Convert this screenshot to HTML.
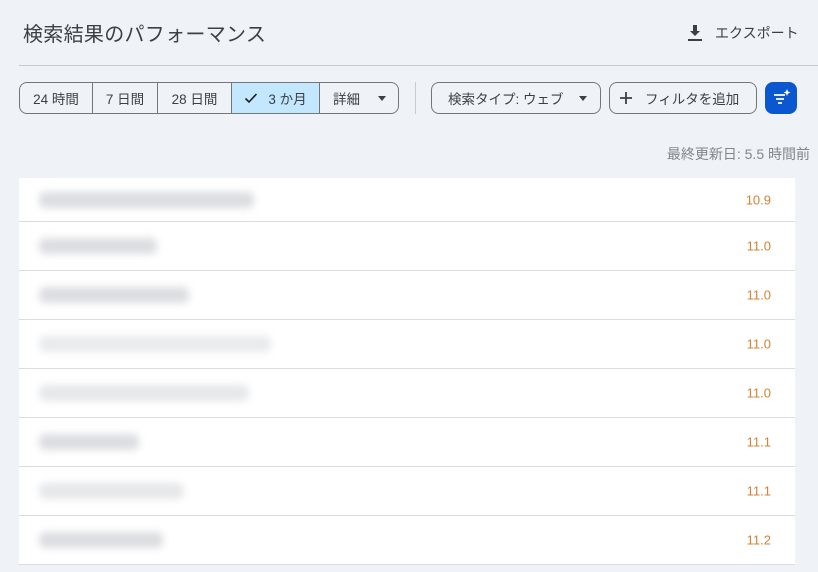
<!DOCTYPE html>
<html><head><meta charset="utf-8"><style>
*{margin:0;padding:0;box-sizing:border-box}
body{width:818px;height:572px;background:#eff2f7;font-family:"Liberation Sans","Noto Sans CJK JP",sans-serif;color:#3c4043;position:relative;overflow:hidden}
.abs{position:absolute}
h1{position:absolute;left:23px;top:18px;font-size:20px;font-weight:400;color:#3c4043;letter-spacing:0.3px}
.exp{position:absolute;left:686px;top:23px;font-size:14px;color:#3c4043;display:flex;align-items:center;gap:11px}
.hr{position:absolute;left:19px;right:0;top:65px;height:1px;background:#c8cacd}
.seg{position:absolute;left:19px;top:82px;height:32px;border:1px solid #747775;border-radius:8px;display:flex;overflow:hidden;font-size:13.5px}
.seg div{display:flex;align-items:center;justify-content:center;border-right:1px solid #747775;height:100%}
.seg div:last-child{border-right:none}
.btn{position:absolute;top:82px;height:32px;border:1px solid #747775;border-radius:8px;display:flex;align-items:center;font-size:13.5px}
.vs{position:absolute;left:415px;top:82px;width:1px;height:32px;background:#c8cacd}
.upd{position:absolute;right:8px;top:144px;font-size:14px;color:#80868b}
.tbl{position:absolute;left:19px;top:178px;width:776px;background:#fff}
.row{height:49px;border-bottom:1px solid #dadce0;position:relative}
.row:first-child{height:44px}
.row .v{position:absolute;right:24px;top:50%;transform:translateY(-50%);font-size:13px;color:#d38236}
.row .b{position:absolute;left:20px;top:50%;height:16px;margin-top:-8px;background:#dcdde0;filter:blur(4px);border-radius:6px}
</style></head><body>
<h1>検索結果のパフォーマンス</h1>
<div class="exp"><svg width="18" height="18" viewBox="0 0 18 18"><path d="M7 1h4v6h3l-5 5-5-5h3z" fill="#3c4043"/><rect x="2" y="15" width="14" height="2" fill="#3c4043"/></svg><span>エクスポート</span></div>
<div class="hr"></div>
<div class="seg">
<div style="width:73px">24 時間</div>
<div style="width:65px">7 日間</div>
<div style="width:74px">28 日間</div>
<div style="width:88px;background:#c2e7ff"><svg width="14" height="12" viewBox="0 0 14 12" style="margin-right:10px"><path d="M1.5 6.5l3.5 3.5 7.5-8" stroke="#1f1f1f" stroke-width="1.6" fill="none"/></svg>3 か月</div>
<div style="width:78px;justify-content:flex-start;padding-left:13px">詳細<span style="margin-left:18px;border-left:4px solid transparent;border-right:4px solid transparent;border-top:5px solid #3c4043"></span></div>
</div>
<div class="vs"></div>
<div class="btn" style="left:431px;width:170px;padding-left:16px">検索タイプ: ウェブ<span style="margin-left:15px;border-left:4px solid transparent;border-right:4px solid transparent;border-top:5px solid #3c4043"></span></div>
<div class="btn" style="left:609px;width:148px;padding-left:9px"><svg width="14" height="14" viewBox="0 0 14 14" style="margin-right:12px"><path d="M7 1v12M1 7h12" stroke="#3c4043" stroke-width="1.8"/></svg>フィルタを追加</div>
<div class="abs" style="left:765px;top:82px;width:32px;height:32px;background:#0b57d0;border-radius:8px"><svg width="32" height="32" viewBox="0 0 32 32"><path d="M9 13h11M11 17h8M13 21h4" stroke="#fff" stroke-width="1.8"/><path d="M22 7l1 2.5 2.5 1-2.5 1-1 2.5-1-2.5-2.5-1 2.5-1z" fill="#fff"/></svg></div>
<div class="upd">最終更新日: 5.5 時間前</div>
<div class="tbl">
<div class="row"><div class="b" style="width:215px"></div><div class="v">10.9</div></div>
<div class="row"><div class="b" style="width:118px"></div><div class="v">11.0</div></div>
<div class="row"><div class="b" style="width:150px"></div><div class="v">11.0</div></div>
<div class="row"><div class="b" style="width:232px;background:#e9eaec"></div><div class="v">11.0</div></div>
<div class="row"><div class="b" style="width:210px;background:#e6e7e9"></div><div class="v">11.0</div></div>
<div class="row"><div class="b" style="width:100px"></div><div class="v">11.1</div></div>
<div class="row"><div class="b" style="width:145px;background:#e6e7e9"></div><div class="v">11.1</div></div>
<div class="row"><div class="b" style="width:124px"></div><div class="v">11.2</div></div>
</div>
</body></html>
